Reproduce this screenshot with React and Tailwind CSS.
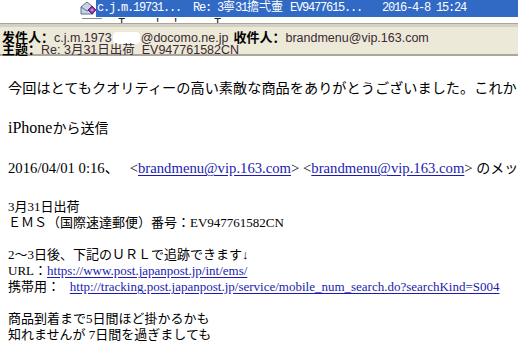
import React from 'react';

const mono = { fontFamily: '"Liberation Mono", "Noto Sans CJK SC", monospace' };

const MailIcon = () => (
  <svg width="16" height="15" viewBox="0 0 16 15">
    <path d="M1 6 L7 1 L13 6 L13 13 L1 13 Z" fill="#c9d3e6" stroke="#5a6f96" strokeWidth="1" />
    <path d="M1 6 L7 10 L13 6" fill="none" stroke="#5a6f96" strokeWidth="1" />
    <path d="M8 9 L12 5 L16 9 L12 13 Z" fill="#8a2c9c" stroke="#4a1060" strokeWidth="0.8" />
    <path d="M10 9 L12 7 L14 9 L12 11 Z" fill="#d27ae0" />
  </svg>
);

const Link = ({ children }) => (
  <span className="text-[#1b1bb0] underline underline-offset-[2px]">{children}</span>
);

// Japanese runs in the 16px lines render a bit narrower than the Latin text
const Ja = ({ children }) => <span className="text-[14px]">{children}</span>;

export default function App() {
  return (
    <div className="w-[518px] h-[341px] overflow-hidden bg-white">
      {/* message list (selected row) */}
      <div className="h-[17px] flex items-center">
        <div className="w-[80px]" />
        <div className="w-[16px] flex items-center">
          <MailIcon />
        </div>
        <div
          className="flex-1 h-[17px] bg-[#316ac5] text-white text-[12px] leading-[17px] tracking-[-1.2px] whitespace-nowrap flex"
          style={mono}
        >
          <span className="w-[97px] pl-[1px]">c.j.m.19731...</span>
          <span className="w-[97px] flex">
            Re: 3<span className="tracking-normal">寧</span>31
            <span className="tracking-normal">擔弌壷</span>
          </span>
          <span className="w-[92px]">EV9477615...</span>
          <span>2016-4-8 15:24</span>
        </div>
      </div>
      <div className="h-[6px] overflow-hidden bg-white">
        <div className="flex text-[12px] leading-[17px] -mt-[1px] text-[#222] tracking-[-1.2px]" style={mono}>
          <span className="w-[82px]" />
          <span className="w-[20px] h-[1px] mt-[2px] bg-[#8a8a8a]" />
          <span className="w-[16px]" />
          <span className="w-[36px]">T  .</span>
          <span className="w-[60px]">' ,'.</span>
          <span>T ..  ..</span>
        </div>
      </div>
      <div className="h-[1px] bg-[#a9a799]" />
      <div className="h-[3px] bg-[#d4d0c6]" />

      {/* header */}
      <div
        className="h-[29px] bg-[#ece9d8] pt-[5px] pl-[2px] text-[12.5px] leading-[12px] border-b-2 border-[#aca899] text-[#3a2a33]"
        style={{ fontFamily: '"Liberation Sans", "Noto Sans CJK SC", sans-serif' }}
      >
        <div className="flex items-center whitespace-nowrap h-[12px]">
          <span className="font-bold text-black text-[13px]">发件人：</span>
          <span>c.j.m.1973</span>
          <span className="w-[27px] h-[12px] bg-white mx-[1px] rounded-sm" />
          <span>@docomo.ne.jp</span>
          <span className="ml-[5px] font-bold text-black text-[13px]">收件人：</span>
          <span>brandmenu@vip.163.com</span>
        </div>
        <div className="flex items-center whitespace-nowrap h-[12px]">
          <span className="font-bold text-black text-[13px]">主题：</span>
          <span>Re: 3月31日出荷&nbsp;&nbsp;EV947761582CN</span>
        </div>
      </div>

      {/* body */}
      <div
        className="pl-[8px] text-black whitespace-nowrap"
        style={{ fontFamily: '"Liberation Serif", "Noto Sans CJK JP", serif' }}
      >
        <div className="mt-[22px] h-[20px] text-[14.2px] leading-[20px]">
          今回はとてもクオリティーの高い素敵な商品をありがとうございました。これからもよろしくお願いします。
        </div>
        <div className="mt-[20px] h-[20px] text-[16px] leading-[20px]">
          iPhone<Ja>から送信</Ja>
        </div>
        <div className="mt-[20px] h-[20px] text-[14.7px] leading-[20px]">
          2016/04/01 0:16<Ja>、</Ja>&nbsp;&nbsp; &lt;<Link>brandmenu@vip.163.com</Link>&gt; &lt;
          <Link>brandmenu@vip.163.com</Link>&gt; <Ja>のメッセージ:</Ja>
        </div>
        <div className="mt-[21px] text-[13px] leading-[16px]">
          <div className="h-[16px]">3月31日出荷</div>
          <div className="h-[16px]">ＥＭＳ（国際速達郵便）番号：EV947761582CN</div>
          <div className="h-[16px]" />
          <div className="h-[16px]">2～3日後、下記のＵＲＬで追跡できます↓</div>
          <div className="h-[16px]">
            URL：<Link>https://www.post.japanpost.jp/int/ems/</Link>
          </div>
          <div className="h-[16px]">
            携帯用：&nbsp;&nbsp;&nbsp;
            <Link>http://tracking.post.japanpost.jp/service/mobile_num_search.do?searchKind=S004</Link>
          </div>
          <div className="h-[16px]" />
          <div className="h-[16px]">商品到着まで5日間ほど掛かるかも</div>
          <div className="h-[16px]">知れませんが 7日間を過ぎましても</div>
        </div>
      </div>
    </div>
  );
}
